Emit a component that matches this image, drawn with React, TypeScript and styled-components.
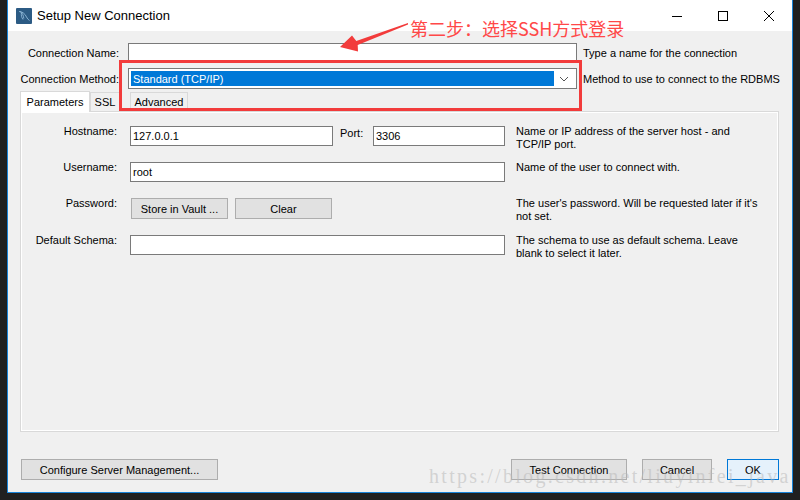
import styled, { createGlobalStyle } from 'styled-components';

const GlobalStyle = createGlobalStyle`
  html, body {
    margin: 0;
    padding: 0;
    background: #202020;
  }
  body {
    width: 800px;
    height: 500px;
    overflow: hidden;
    font-family: "Liberation Sans", Arial, sans-serif;
    font-size: 11px;
    color: #000;
  }
`;

const Desktop = styled.div`
  position: relative;
  width: 800px;
  height: 500px;
  padding-left: 7px;
  box-sizing: border-box;
`;

const Window = styled.div`
  width: 786px;
  height: 493px;
  box-sizing: border-box;
  border: 1px solid #1883d7;
  border-top: none;
  background: #f0f0f0;
  display: flex;
  flex-direction: column;
`;

const TitleBar = styled.div`
  height: 31px;
  flex-shrink: 0;
  background: #fff;
  display: flex;
  align-items: center;
  padding-left: 8px;
`;

const AppIcon = styled.svg`
  width: 16px;
  height: 16px;
  margin-right: 5px;
`;

const Title = styled.div`
  flex: 1;
  font-size: 13px;
`;

const WinButton = styled.div`
  width: 46px;
  height: 31px;
  display: flex;
  align-items: center;
  justify-content: center;
`;

const Body = styled.div`
  flex: 1;
  display: flex;
  flex-direction: column;
  padding: 12px 13px 12px 0;
`;

const TopRow = styled.div<{ $h: number }>`
  display: flex;
  align-items: center;
  height: ${p => p.$h}px;
  margin-bottom: 5px;
`;

const TopLabel = styled.div`
  width: 120px;
  flex-shrink: 0;
  padding-right: 9px;
  box-sizing: border-box;
  text-align: right;
  white-space: nowrap;
`;

const TextInput = styled.div<{ $w: number }>`
  width: ${p => p.$w}px;
  height: 20px;
  box-sizing: border-box;
  border: 1px solid #7a7a7a;
  background: #fff;
  display: flex;
  align-items: center;
  padding-left: 2px;
  flex-shrink: 0;
`;

const Select = styled.div`
  width: 449px;
  height: 21px;
  flex-shrink: 0;
  box-sizing: border-box;
  border: 1px solid #7a7a7a;
  background: #fff;
  display: flex;
  align-items: center;
  padding: 2px;
`;

const SelectValue = styled.div`
  flex: 1;
  height: 100%;
  background: #0078d7;
  color: #fff;
  display: flex;
  align-items: center;
  padding-left: 2px;
`;

const Chevron = styled.svg`
  width: 20px;
  height: 10px;
`;

const TopHelp = styled.div`
  margin-left: 6px;
  white-space: nowrap;
`;

const TabStrip = styled.div`
  display: flex;
  align-items: flex-end;
  height: 21px;
  margin-left: 12px;
  margin-top: -4px;
`;

const Tab = styled.div<{ $w: number; $active?: boolean; $gap?: number }>`
  width: ${p => p.$w}px;
  height: ${p => (p.$active ? 21 : 19)}px;
  margin-left: ${p => p.$gap ?? 0}px;
  box-sizing: border-box;
  border: 1px solid #d9d9d9;
  border-bottom: none;
  background: ${p => (p.$active ? '#fff' : '#f0f0f0')};
  display: flex;
  align-items: center;
  justify-content: center;
  margin-bottom: ${p => (p.$active ? -1 : 0)}px;
  position: relative;
  z-index: ${p => (p.$active ? 1 : 0)};
`;

const Panel = styled.div`
  margin-left: 12px;
  height: 321px;
  box-sizing: border-box;
  border: 1px solid #d9d9d9;
  box-shadow: inset 0 0 0 1px #fff;
  background: #f0f0f0;
  padding-top: 14px;
  display: grid;
  grid-template-columns: 109px 375px 1fr;
  grid-template-rows: 20px 20px 21px 20px;
  row-gap: 16px;
  align-content: start;
`;

const FieldLabel = styled.div`
  padding-right: 13px;
  text-align: right;
  line-height: 13px;
  margin-top: -1px;
  white-space: nowrap;
`;

const Fields = styled.div`
  display: flex;
  align-items: flex-start;
`;

const PortLabel = styled.div`
  width: 40px;
  padding-left: 7px;
  box-sizing: border-box;
  line-height: 13px;
  margin-top: 1px;
`;

const Help = styled.div`
  padding-left: 11px;
  padding-right: 14px;
  line-height: 13px;
  margin-top: -1px;
`;

const Button = styled.div<{ $w: number; $primary?: boolean }>`
  width: ${p => p.$w}px;
  height: 21px;
  box-sizing: border-box;
  border: 1px solid ${p => (p.$primary ? '#0078d7' : '#adadad')};
  background: ${p => (p.$primary ? '#e5f1fb' : '#e1e1e1')};
  display: flex;
  align-items: center;
  justify-content: center;
  flex-shrink: 0;
  white-space: nowrap;
`;

const PwButtons = styled.div`
  display: flex;
  gap: 7px;
  padding-left: 1px;
`;

const Footer = styled.div`
  margin-top: auto;
  display: flex;
  align-items: center;
  gap: 15px;
  padding-left: 13px;
`;

const Spacer = styled.div`
  flex: 1;
`;

const Highlight = styled.div`
  position: absolute;
  left: 119px;
  top: 60px;
  width: 463px;
  height: 51px;
  box-sizing: border-box;
  border: 3px solid #f23b3b;
  pointer-events: none;
`;

const ArrowSvg = styled.svg`
  position: absolute;
  left: 0;
  top: 0;
  pointer-events: none;
`;

const Note = styled.div`
  position: absolute;
  left: 410px;
  top: 15px;
  font-family: "Noto Sans CJK SC", sans-serif;
  font-size: 18px;
  color: #ff4848;
  white-space: nowrap;
`;

const Watermark = styled.div`
  position: absolute;
  left: 429px;
  top: 465px;
  font-family: "Liberation Serif", serif;
  font-size: 20px;
  letter-spacing: 2.3px;
  color: rgba(185, 185, 185, 0.55);
  white-space: nowrap;
  pointer-events: none;
`;

export default function App() {
  return (
    <Desktop>
      <GlobalStyle />
      <Window>
        <TitleBar>
          <AppIcon viewBox="0 0 16 16">
            <rect x="0" y="0" width="16" height="16" rx="1" fill="#2c5b84" />
            <path d="M3 3.5c3 0 6 2 7.5 5.5M4 3.5c2.5 1.5 3.5 4 3.8 7M5.5 4.5c-0.5 2.5 0 5 1.5 7M10.5 9c0.8 1.5 1.8 2.8 3 3.5" stroke="#8fb8d8" strokeWidth="0.9" fill="none" />
          </AppIcon>
          <Title>Setup New Connection</Title>
          <WinButton>
            <svg width="10" height="10" viewBox="0 0 10 10">
              <path d="M0 5.5h10" stroke="#000" strokeWidth="1" />
            </svg>
          </WinButton>
          <WinButton>
            <svg width="10" height="10" viewBox="0 0 10 10">
              <rect x="0.5" y="0.5" width="9" height="9" stroke="#000" strokeWidth="1" fill="none" />
            </svg>
          </WinButton>
          <WinButton>
            <svg width="10" height="10" viewBox="0 0 10 10">
              <path d="M0 0L10 10M10 0L0 10" stroke="#000" strokeWidth="1" />
            </svg>
          </WinButton>
        </TitleBar>
        <Body>
          <TopRow $h={20}>
            <TopLabel>Connection Name:</TopLabel>
            <TextInput $w={449} />
            <TopHelp>Type a name for the connection</TopHelp>
          </TopRow>
          <TopRow $h={21}>
            <TopLabel>Connection Method:</TopLabel>
            <Select>
              <SelectValue>Standard (TCP/IP)</SelectValue>
              <Chevron viewBox="0 0 20 10">
                <path d="M6 3l4 4 4-4" stroke="#555" strokeWidth="1" fill="none" />
              </Chevron>
            </Select>
            <TopHelp>Method to use to connect to the RDBMS</TopHelp>
          </TopRow>
          <TabStrip>
            <Tab $w={70} $active>Parameters</Tab>
            <Tab $w={30}>SSL</Tab>
            <Tab $w={58} $gap={10}>Advanced</Tab>
          </TabStrip>
          <Panel>
            <FieldLabel>Hostname:</FieldLabel>
            <Fields>
              <TextInput $w={203}>127.0.0.1</TextInput>
              <PortLabel>Port:</PortLabel>
              <TextInput $w={132}>3306</TextInput>
            </Fields>
            <Help>Name or IP address of the server host - and TCP/IP port.</Help>

            <FieldLabel>Username:</FieldLabel>
            <Fields>
              <TextInput $w={375}>root</TextInput>
            </Fields>
            <Help>Name of the user to connect with.</Help>

            <FieldLabel>Password:</FieldLabel>
            <PwButtons>
              <Button $w={97}>Store in Vault ...</Button>
              <Button $w={97}>Clear</Button>
            </PwButtons>
            <Help>The user's password. Will be requested later if it's not set.</Help>

            <FieldLabel>Default Schema:</FieldLabel>
            <Fields>
              <TextInput $w={375} />
            </Fields>
            <Help>The schema to use as default schema. Leave blank to select it later.</Help>
          </Panel>
          <Footer>
            <Button $w={197}>Configure Server Management...</Button>
            <Spacer />
            <Button $w={116}>Test Connection</Button>
            <Button $w={70}>Cancel</Button>
            <Button $w={52} $primary>OK</Button>
          </Footer>
        </Body>
      </Window>
      <Highlight />
      <ArrowSvg width="800" height="500" viewBox="0 0 800 500">
        <polygon points="408,23 356.3,41.1 352,35.5 340,47 358,51.5 357.7,44.9 408,24.5" fill="#f23b3b" />
      </ArrowSvg>
      <Note>第二步：选择SSH方式登录</Note>
      <Watermark>https://blog.csdn.net/liuyinfei_java</Watermark>
    </Desktop>
  );
}
